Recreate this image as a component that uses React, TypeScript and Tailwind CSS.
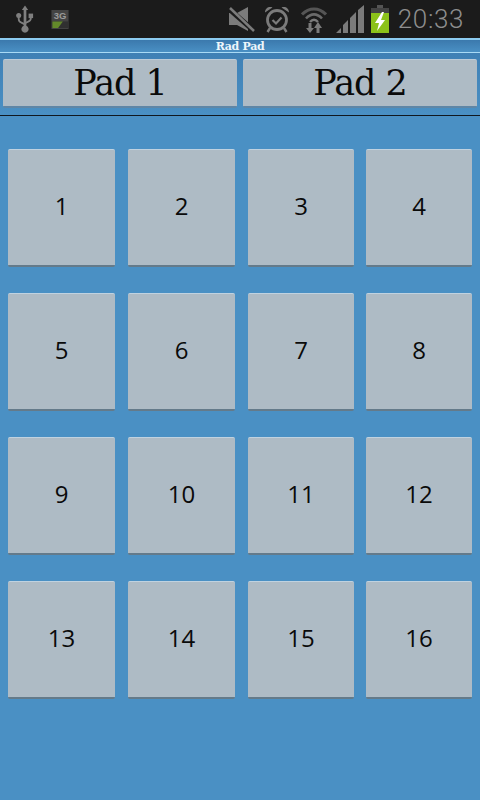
const rows = [
  ["1", "2", "3", "4"],
  ["5", "6", "7", "8"],
  ["9", "10", "11", "12"],
  ["13", "14", "15", "16"],
];
const widths = ["w-[107px] mr-[13px]", "w-[107px] mr-[13px]", "w-[106px] mr-[12px]", "w-[106px]"];

function Pad({ label, cls }: { label: string; cls: string }) {
  return (
    <div className={`${cls} h-[118px] flex items-center justify-center rounded-[2px] bg-[#aebbc5] border-t border-t-[#c0d2e0] border-b-2 border-b-[#647a8a] pb-[4px] text-[24px] leading-none text-[#0a0a0a] font-['Open_Sans',sans-serif]`}>
      {label}
    </div>
  );
}

function Tab({ label, cls }: { label: string; cls: string }) {
  return (
    <div className={`${cls} h-[49px] flex items-center justify-center rounded-[2px] bg-[#aebbc5] border-t border-t-[#bccbd8] border-b-2 border-b-[#5f86a6] text-[35px] leading-none text-[#0a0a0a] font-['DejaVu_Serif',serif] tracking-[-1px]`}>
      {label}
    </div>
  );
}

function StatusIcons() {
  return (
    <div className="ml-auto flex items-center">
      {/* mute */}
      <svg width="28" height="26" viewBox="0 0 28 26" className="mr-[8px]">
        <path d="M1 7h8l11-6v24L9 19H1z" fill="#7b7b7b" />
        <path d="M1 3l25 22" stroke="#1b1b1b" strokeWidth="5" />
        <path d="M2 2l24 23" stroke="#7b7b7b" strokeWidth="2.5" />
      </svg>
      {/* alarm */}
      <svg width="26" height="28" viewBox="0 0 26 28" className="mr-[11px]">
        <circle cx="13" cy="15" r="9.500" fill="none" stroke="#7b7b7b" strokeWidth="2.800" />
        <path d="M8.500 15l3.500 3.500 5.500-6" fill="none" stroke="#7b7b7b" strokeWidth="2.200" />
        <path d="M1 7.500C1 3 5 1 8.500 2.500zM25 7.500C25 3 21 1 17.500 2.500z" fill="#7b7b7b" />
        <path d="M6 23l-2.500 4M20 23l2.500 4" stroke="#7b7b7b" strokeWidth="2.400" />
      </svg>
      {/* wifi */}
      <svg width="26" height="28" viewBox="0 0 26 28" className="mr-[9px]">
        <path d="M1 9.500C8 2 18 2 25 9.500" fill="none" stroke="#555555" strokeWidth="3" />
        <path d="M5 13.500C10 8 16 8 21 13.500" fill="none" stroke="#6a6a6a" strokeWidth="2.600" />
        <path d="M9 17C11.500 14 14.500 14 17 17" fill="none" stroke="#7b7b7b" strokeWidth="2.400" />
        <path d="M7.500 18h3v5h2.500l-4 5-4-5h2.500zM15.500 28h3v-5H21l-4-6-4 6h2.500z" fill="#7b7b7b" />
      </svg>
      {/* signal */}
      <svg width="29" height="28" viewBox="0 0 29 28" className="mr-[6px]">
        <path d="M0 28l5-5v5zM7 28v-8l5-5v13zM14 28V13l6-6v21zM22 28V5l6-5v28z" fill="#7b7b7b" />
      </svg>
      {/* battery */}
      <svg width="18" height="28" viewBox="0 0 18 28" className="mr-[9px]">
        <path d="M6 0h6v3H6z" fill="#555" />
        <path d="M0 3h18v5H0z" fill="#444" />
        <path d="M0 8h18v20H0z" fill="#8cc21a" />
        <path d="M11 7L4 18h4l-2 8 8-11h-4l3-8z" fill="#fff" />
      </svg>
      <span className="text-[26px] leading-none font-light text-[#8e8e8e] font-['Roboto',sans-serif] tracking-[0.6px] mr-[16px]">
        20:33
      </span>
    </div>
  );
}

export default function App() {
  return (
    <div className="w-[480px] h-[800px] overflow-hidden flex flex-col bg-[#4a90c4]">
      <div className="h-[38px] shrink-0 flex items-center bg-[#1b1b1b]">
        <svg width="18" height="28" viewBox="0 0 20 30" className="ml-[16px]">
          <path d="M10 0l3.500 5H11.500v17.500a4 4 0 1 1-3 0V5H6.500z" fill="#7f7f7f" />
          <circle cx="3" cy="11" r="2.800" fill="#7f7f7f" />
          <path d="M14 9h5v5h-5z" fill="#7f7f7f" />
          <path d="M3 12v3q0 3 3 4l4 2M16.500 12v2q0 3-3 4l-3 1.500" fill="none" stroke="#7f7f7f" strokeWidth="2" />
        </svg>
        <svg width="18" height="19" viewBox="0 0 18 20" className="ml-[17px]">
          <rect x="0" y="0" width="18" height="20" fill="#444444" />
          <rect x="0" y="12" width="18" height="7" fill="#303030" />
          <path d="M1 19V12h11l-5 7z" fill="#63892a" />
          <text x="9" y="9.500" textAnchor="middle" fontSize="10" fontWeight="700" fill="#9a9a9a" fontFamily="Liberation Sans, sans-serif">3G</text>
        </svg>
        <StatusIcons />
      </div>
      <div className="h-[15px] shrink-0 flex items-center justify-center border-t-2 border-t-[#8ccbf0] border-b border-b-[#a9daf5] bg-gradient-to-b from-[#3b79ad] to-[#4a90c4] text-[11px] leading-none font-bold text-[#eef6fb] font-['DejaVu_Serif',serif] tracking-[-0.3px]">
        Rad Pad
      </div>
      <div className="h-[63px] shrink-0 flex pl-[3px] pt-[6px] border-b border-b-[#101820] bg-gradient-to-b from-[#3f80b5] to-[#4a90c4]">
        <Tab label="Pad 1" cls="w-[234px] mr-[6px]" />
        <Tab label="Pad 2" cls="w-[234px]" />
      </div>
      <div className="flex flex-col gap-[26px] pt-[33px] pl-[8px]">
        {rows.map((r, i) => (
          <div key={i} className="flex">
            {r.map((l, j) => (
              <Pad key={l} label={l} cls={widths[j]} />
            ))}
          </div>
        ))}
      </div>
    </div>
  );
}
